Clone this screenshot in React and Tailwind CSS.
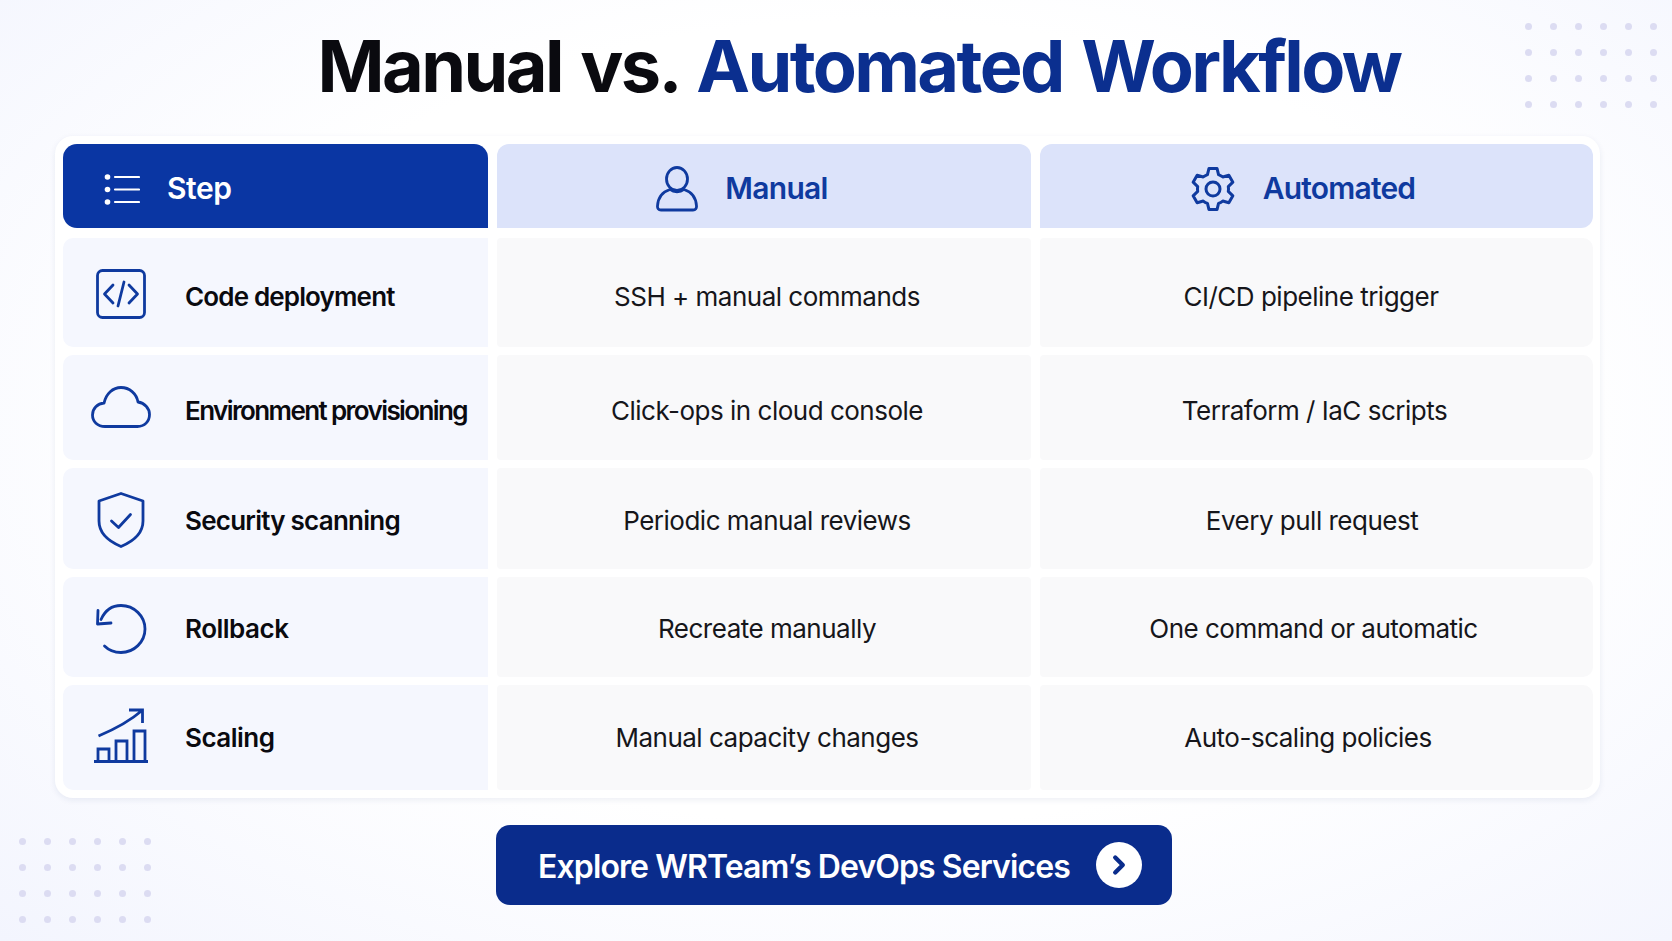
import { ChevronRight } from "lucide-react";

const rows = [
  { h: "h-[109px] pt-[8px]", iconPad: "pb-[5px]", autoPad: "pr-[11px]", track: "tracking-[-0.85px]", label: "Code deployment", manual: "SSH + manual commands", auto: "CI/CD pipeline trigger", Icon: CodeIcon },
  { h: "h-[105px] pt-[6px]", iconPad: "pb-[7px]", autoPad: "pr-[4px]", track: "tracking-[-1.6px]", label: "Environment provisioning", manual: "Click-ops in cloud console", auto: "Terraform / IaC scripts", Icon: CloudIcon },
  { h: "h-[101px] pt-[4px]", iconPad: "pb-[1px]", autoPad: "pr-[9px]", track: "tracking-[-0.75px]", label: "Security scanning", manual: "Periodic manual reviews", auto: "Every pull request", Icon: ShieldIcon },
  { h: "h-[100px] pt-[2px]", iconPad: "pt-[2px]", autoPad: "pr-[6px]", track: "tracking-[-0.5px]", label: "Rollback", manual: "Recreate manually", auto: "One command or automatic", Icon: RollbackIcon },
  { h: "h-[105px]", iconPad: "pb-[4px]", autoPad: "pr-[17px]", track: "tracking-[-0.5px]", label: "Scaling", manual: "Manual capacity changes", auto: "Auto-scaling policies", Icon: ScalingIcon },
];

const stroke = { fill: "none", stroke: "currentColor", strokeWidth: 2.8, strokeLinecap: "round", strokeLinejoin: "round" };

// six-tooth gear outline, centred on 23,23
function gearPath() {
  const pt = (r, deg) => {
    const a = ((deg - 90) * Math.PI) / 180;
    return `${(23 + r * Math.cos(a)).toFixed(2)} ${(23 + r * Math.sin(a)).toFixed(2)}`;
  };
  let d = "";
  for (let i = 0; i < 6; i++) {
    const c = i * 60;
    d += `${i ? "L" : "M"}${pt(15.5, c - 21)}L${pt(21, c - 11)}L${pt(21, c + 11)}L${pt(15.5, c + 21)}`;
    d += `A15.5 15.5 0 0 1 ${pt(15.5, c + 39)}`;
  }
  return d + "Z";
}

function ListIcon() {
  return (
    <svg width="36" height="32" viewBox="0 0 36 32" className="text-white">
      <g {...stroke} strokeWidth="2.2">
        <path d="M11 4h24M11 16.500h24M11 29h24" />
      </g>
      <circle cx="3.500" cy="4" r="2.800" fill="currentColor" />
      <circle cx="3.500" cy="16.500" r="2.800" fill="currentColor" />
      <circle cx="3.500" cy="29" r="2.800" fill="currentColor" />
    </svg>
  );
}

function PersonIcon() {
  return (
    <svg width="42" height="46" viewBox="0 0 42 46" className="text-[#0f3a9f]">
      <g {...stroke}>
        <ellipse cx="21" cy="13" rx="10.500" ry="11.500" />
        <path d="M14 23.500C6 26 2 32 1.500 40c-.2 2.500 1 4 3.500 4h32c2.500 0 3.700-1.500 3.500-4C40 32 36 26 28 23.500c-4 3-10 3-14 0Z" />
      </g>
    </svg>
  );
}

function GearIcon() {
  return (
    <svg width="46" height="46" viewBox="0 0 46 46" className="text-[#0f3a9f]">
      <g {...stroke} strokeWidth="3">
        <path d={gearPath()} />
        <circle cx="23" cy="23" r="7" />
      </g>
    </svg>
  );
}

function CodeIcon() {
  return (
    <svg width="50" height="50" viewBox="0 0 50 50">
      <g {...stroke}>
        <rect x="1.500" y="1.500" width="47" height="47" rx="5" />
        <path d="M17 16l-8.500 9 8.500 9M33 16l8.500 9-8.500 9M28 13l-6 24" />
      </g>
    </svg>
  );
}

function CloudIcon() {
  return (
    <svg width="60" height="42" viewBox="0 0 60 42">
      <path {...stroke} d="M14 40.500C6.500 40.500 1.500 35.500 1.500 29c0-6.500 5-11.500 11.500-11.800C15 7.500 22 1.500 30 1.500c8.500 0 15.500 6 17 14.500 6.500 1 11.500 6 11.500 12.500 0 7-5 12-12 12Z" />
    </svg>
  );
}

function ShieldIcon() {
  return (
    <svg width="48" height="56" viewBox="0 0 48 56">
      <g {...stroke}>
        <path d="M24 1.500 46 9v20c0 12-9 20-22 25.500C11 49 2 41 2 29V9Z" />
        <path d="M14.500 29l7 6.500 12-13" />
      </g>
    </svg>
  );
}

function RollbackIcon() {
  return (
    <svg width="52" height="50" viewBox="0 0 52 50">
      <g {...stroke}>
        <path d="M6 15.500C10 6.500 17 1.500 26 1.500c13 0 24 10.500 24 23.500S39 48.500 26 48.500c-6.500 0-12-2-16.500-6.500" />
        <path d="M3 6.500 2.500 20l13.500-1" />
      </g>
    </svg>
  );
}

function ScalingIcon() {
  return (
    <svg width="56" height="56" viewBox="0 0 56 56">
      <g {...stroke} strokeLinecap="butt" strokeLinejoin="miter">
        <path d="M1 53.500h54M5 53.500V41h11v12.500M23 53.500V33h11v20.500M41 53.500V23h11v30.500" />
        <path d="M5.500 28C22 21 37 13 49 2.500M36 2h13.500v13" />
      </g>
    </svg>
  );
}

function Dots({ className }) {
  return (
    <div className={`absolute grid grid-cols-6 gap-x-[18px] gap-y-[19px] ${className}`}>
      {Array.from({ length: 24 }).map((_, i) => (
        <span key={i} className="w-[7px] h-[7px] rounded-full bg-[#dcdcf2]" />
      ))}
    </div>
  );
}

export default function App() {
  return (
    <div className="relative w-[1672px] h-[941px] overflow-hidden font-['Inter',sans-serif] bg-[radial-gradient(ellipse_at_52%_45%,#ffffff_55%,#f3f5fe_100%)]">
      <Dots className="top-[23px] left-[1525px]" />
      <Dots className="top-[838px] left-[19px]" />

      <h1 className="pt-[23px] pl-[46px] h-[136px] text-center text-[72px] leading-[86px] font-bold tracking-[-2.6px] [word-spacing:4px] text-[#0a0a0f]">
        Manual vs. <span className="text-[#0b2f8f]">Automated Workflow</span>
      </h1>

      <div className="ml-[55px] w-[1545px] rounded-[18px] bg-white p-2 shadow-[0_2px_6px_rgba(30,50,120,0.08)]">
        <div className="grid grid-cols-[425px_534px_553px] gap-x-[9px] gap-y-2 text-[26px] tracking-[-0.5px]">
          <div className="mb-[2px] h-[84px] flex items-center gap-[27px] pl-[41px] pt-[5px] rounded-[14px] rounded-br-none bg-[#0a36a3] text-white font-semibold text-[30px] tracking-[-0.4px]">
            <ListIcon />
            Step
          </div>
          <div className="mb-[2px] h-[84px] flex items-center justify-center gap-[27px] pr-[44px] pt-[5px] rounded-t-[12px] bg-[#dce3fa] text-[#0f3a9f] font-semibold text-[30px] tracking-[-0.7px]">
            <PersonIcon />
            Manual
          </div>
          <div className="mb-[2px] h-[84px] flex items-center justify-center gap-[27px] pr-[28px] pt-[5px] rounded-[12px] rounded-bl-none bg-[#dce3fa] text-[#0f3a9f] font-semibold text-[30px] tracking-[-0.8px]">
            <GearIcon />
            Automated
          </div>
          {rows.map(({ h, iconPad, autoPad, track, label, manual, auto, Icon }) => (
            <div key={label} className="contents">
              <div className={`${h} flex items-center rounded-l-[10px] bg-[#f5f7fe]`}>
                <div className={`w-[122px] pr-[6px] flex justify-center text-[#0f3a9f] ${iconPad}`}>
                  <Icon />
                </div>
                <span className={`whitespace-nowrap text-[#0a0a0f] font-semibold ${track}`}>{label}</span>
              </div>
              <div className={`${h} pl-[6px] flex items-center justify-center rounded-[4px] bg-[#f9f9fa] text-[#16161a]`}>
                {manual}
              </div>
              <div className={`${h} ${autoPad} flex items-center justify-center rounded-r-[10px] rounded-l-[4px] bg-[#f9f9fa] text-[#16161a]`}>
                {auto}
              </div>
            </div>
          ))}
        </div>
      </div>

      <div className="mt-[27px] flex justify-center pr-1">
        <button className="w-[676px] h-[80px] pl-[12px] flex items-center justify-center gap-[26px] rounded-[14px] bg-[#0a2c8c] text-white text-[32px] font-semibold tracking-[-0.9px]">
          <span className="pt-[4px]">Explore WRTeam’s DevOps Services</span>
          <span className="w-[46px] h-[46px] rounded-full bg-white flex items-center justify-center text-[#0a2c8c]">
            <ChevronRight size={30} strokeWidth={3.5} />
          </span>
        </button>
      </div>
    </div>
  );
}
